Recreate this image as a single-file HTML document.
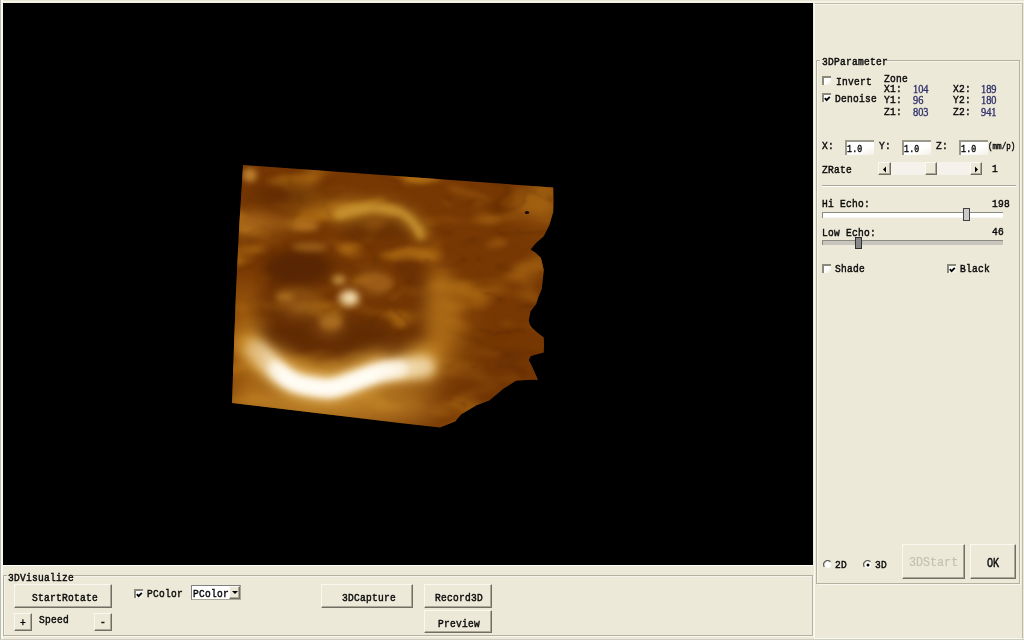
<!DOCTYPE html>
<html><head><meta charset="utf-8">
<style>
*{margin:0;padding:0;box-sizing:border-box}
html,body{width:1024px;height:640px;overflow:hidden;background:#ECE9D8}
body{position:relative;font-family:"Liberation Mono",monospace;font-size:11px;color:#000}
.a{position:absolute}
.t{position:absolute;white-space:pre;font-size:11px;line-height:11px;transform:scaleX(0.87);letter-spacing:0.3px;transform-origin:0 0;color:#0A0A0A;-webkit-text-stroke:0.45px #0A0A0A}
.t.n{font-family:"Liberation Serif",serif;font-size:11.5px;letter-spacing:0;color:#30306A;-webkit-text-stroke:0.35px #30306A;transform:scaleX(0.9)}
.btn{position:absolute;background:#ECE9D8;border-top:1px solid #FAF9F0;border-left:1px solid #FAF9F0;border-right:1px solid #716F64;border-bottom:1px solid #716F64;box-shadow:inset -1px -1px 0 #ACA899}
.grp{position:absolute;border:1px solid #B4B1A0;box-shadow:1px 1px 0 #F8F6EC, inset 1px 1px 0 #F6F4EA}
.cb{position:absolute;width:9px;height:9px;background:linear-gradient(135deg,#fff 40%,#ECEADC 100%);border-top:2px solid #8A897C;border-left:2px solid #8A897C}
.edit{position:absolute;background:linear-gradient(160deg,#fff 55%,#F2F0E6 100%);border-top:2px solid #9A998C;border-left:2px solid #9A998C}
.chk{position:absolute;left:0px;top:1px;width:7px;height:6px}
</style></head>
<body>
<!-- outer frame -->
<div class="a" style="left:0;top:0;width:1024px;height:3px;background:linear-gradient(#E8E7D6 0,#E8E7D6 1px,#F5F3E6 1px)"></div>
<div class="a" style="left:0;top:0;width:3px;height:640px;background:#F8F9F0"></div>
<div class="a" style="left:0;top:0;width:1px;height:640px;background:#BBBCB0"></div>
<div class="a" style="left:0;top:639px;width:1024px;height:1px;background:#D0CEC0"></div>
<!-- black view -->
<div class="a" style="left:3px;top:3px;width:810px;height:562px;background:#000;overflow:hidden">
<svg width="810" height="562" viewBox="3 3 810 562" style="position:absolute;left:0;top:0">
 <defs>
  <clipPath id="vol"><path d="M243,165 L553.2,187.5 L553.5,200 L553.2,212 L549.4,225 L543.8,236.3 L536,243 L530.7,249.4 L536,253 L541,258 L543.8,270 L541.9,288.8 L538,298 L536.3,303.8 L530.6,311.3 L528.8,320.6 L530,325 L532.5,328.2 L538,333 L543.8,337.5 L544,345 L543.8,352.5 L536,354.5 L530.6,356.3 L528.8,360 L532.5,367.5 L536.3,376 L538,380 L533.8,379.8 L516.2,380.6 L503.3,388.8 L489.2,400.5 L476.3,405.2 L461,414.5 L455.2,421.6 L440,427.4 L400,423 L232,403 L233.5,360 L236,290 L239,230 Z"/></clipPath>
  <filter id="b3" x="-50%" y="-50%" width="200%" height="200%" color-interpolation-filters="sRGB"><feGaussianBlur stdDeviation="3"/></filter>
  <filter id="b5" x="-50%" y="-50%" width="200%" height="200%" color-interpolation-filters="sRGB"><feGaussianBlur stdDeviation="5"/></filter>
  <filter id="b8" x="-50%" y="-50%" width="200%" height="200%" color-interpolation-filters="sRGB"><feGaussianBlur stdDeviation="8"/></filter>
  <filter id="b14" x="-50%" y="-50%" width="200%" height="200%" color-interpolation-filters="sRGB"><feGaussianBlur stdDeviation="14"/></filter>
  <filter id="texL" x="0" y="0" width="100%" height="100%" color-interpolation-filters="sRGB"><feTurbulence type="fractalNoise" baseFrequency="0.018 0.04" numOctaves="2" seed="7"/><feColorMatrix type="matrix" values="0 0 0 0 0.70  0 0 0 0 0.44  0 0 0 0 0.08  5 0 0 0 -2.45"/><feGaussianBlur stdDeviation="2.2"/></filter>
  <filter id="texV" x="0" y="0" width="100%" height="100%" color-interpolation-filters="sRGB"><feTurbulence type="turbulence" baseFrequency="0.02 0.03" numOctaves="2" seed="5"/><feColorMatrix type="matrix" values="0 0 0 0 0.33  0 0 0 0 0.14  0 0 0 0 0.0  -5 0 0 0 0.75"/><feGaussianBlur stdDeviation="1.3"/></filter>
  <linearGradient id="gR" x1="0" y1="0" x2="1" y2="0"><stop offset="0" stop-color="#fff" stop-opacity="1"/><stop offset="0.55" stop-color="#fff" stop-opacity="0.9"/><stop offset="1" stop-color="#fff" stop-opacity="0.35"/></linearGradient>
  <mask id="mL"><rect x="200" y="150" width="400" height="300" fill="url(#gR)"/></mask>
  <linearGradient id="gV" x1="0" y1="0" x2="1" y2="0"><stop offset="0" stop-color="#fff" stop-opacity="0.2"/><stop offset="0.5" stop-color="#fff" stop-opacity="0.35"/><stop offset="1" stop-color="#fff" stop-opacity="0.6"/></linearGradient>
  <mask id="mV"><rect x="200" y="150" width="400" height="300" fill="url(#gV)"/></mask>
  <linearGradient id="gArc" gradientUnits="userSpaceOnUse" x1="256" y1="0" x2="424" y2="0"><stop offset="0" stop-color="#F8E8C8" stop-opacity="0.45"/><stop offset="0.12" stop-color="#F8E8C8" stop-opacity="0.95"/><stop offset="0.8" stop-color="#F8E8C8" stop-opacity="1"/><stop offset="1" stop-color="#F8E8C8" stop-opacity="0.7"/></linearGradient>
  <linearGradient id="gArc2" gradientUnits="userSpaceOnUse" x1="262" y1="0" x2="400" y2="0"><stop offset="0" stop-color="#FFFCF4" stop-opacity="0.2"/><stop offset="0.15" stop-color="#FFFCF4" stop-opacity="1"/><stop offset="0.8" stop-color="#FFFCF4" stop-opacity="1"/><stop offset="1" stop-color="#FFFCF4" stop-opacity="0.6"/></linearGradient>
 </defs>
 <g clip-path="url(#vol)">
  <rect x="200" y="150" width="400" height="300" fill="#773804"/>
  <g mask="url(#mL)"><rect x="200" y="150" width="400" height="300" filter="url(#texL)"/></g>
  <g mask="url(#mV)"><rect x="200" y="150" width="400" height="300" filter="url(#texV)"/></g>
  <g filter="url(#b14)">
   <ellipse cx="330" cy="404" rx="110" ry="20" fill="#C08428"/>
   <ellipse cx="246" cy="340" rx="14" ry="60" fill="#B06C14"/>
   <ellipse cx="490" cy="385" rx="50" ry="26" fill="#6A3004" opacity="0.5"/>
   <ellipse cx="288" cy="197" rx="40" ry="14" fill="#6A3004" opacity="0.5"/>
   <ellipse cx="540" cy="205" rx="16" ry="18" fill="#B07018" opacity="0.7"/>
   <ellipse cx="445" cy="330" rx="20" ry="45" fill="#B07018" opacity="0.6"/>
  </g>
  <g filter="url(#b8)">
   <path d="M256,350 C259.2,353.2 269.0,363.8 275,369 C281.0,374.2 286.3,378.2 292,381 C297.7,383.8 302.3,384.8 309,386 C315.7,387.2 324.0,389.0 332,388 C340.0,387.0 349.0,382.7 357,380 C365.0,377.3 372.8,373.8 380,372 C387.2,370.2 392.7,369.8 400,369 C407.3,368.2 420.0,367.3 424,367" stroke="#D29A3A" stroke-width="36" stroke-linecap="round" fill="none" transform="translate(0,-3)"/>
   <ellipse cx="328" cy="336" rx="68" ry="22" fill="#5A2703" opacity="0.75"/>
   <ellipse cx="272" cy="315" rx="16" ry="28" fill="#5E2A03" opacity="0.55"/>
   <path d="M400,258 Q428,285 418,325 Q408,350 385,358" stroke="#5C2803" stroke-width="16" fill="none" opacity="0.6"/>
   <ellipse cx="335" cy="300" rx="60" ry="40" fill="#6A3004" opacity="0.2"/>
   <ellipse cx="298" cy="268" rx="36" ry="20" fill="#5C2803"/>
   <ellipse cx="378" cy="229" rx="40" ry="8" fill="#5E2A03" opacity="0.75"/>
   
   <ellipse cx="345" cy="210" rx="18" ry="11" fill="#B87C20" opacity="0.8"/>
   <path d="M334,217 Q372,200 404,214 Q418,224 423,240" stroke="#C08A28" stroke-width="10" fill="none"/>
   <ellipse cx="440" cy="312" rx="16" ry="48" fill="#B0701A" opacity="0.75"/>
   <ellipse cx="372" cy="282" rx="14" ry="10" fill="#A86A20" opacity="0.8"/>
   <ellipse cx="300" cy="305" rx="16" ry="10" fill="#A86A20" opacity="0.8"/>
   <ellipse cx="330" cy="325" rx="14" ry="9" fill="#A86A20" opacity="0.8"/>
   <ellipse cx="253" cy="222" rx="14" ry="9" fill="#B07020"/>
   <ellipse cx="287" cy="195" rx="36" ry="11" fill="#5E2A03" opacity="0.75"/>
   <ellipse cx="268" cy="224" rx="26" ry="7" fill="#B47420" opacity="0.8"/>
  </g>
  <g filter="url(#b5)">
   <path d="M256,350 C259.2,353.2 269.0,363.8 275,369 C281.0,374.2 286.3,378.2 292,381 C297.7,383.8 302.3,384.8 309,386 C315.7,387.2 324.0,389.0 332,388 C340.0,387.0 349.0,382.7 357,380 C365.0,377.3 372.8,373.8 380,372 C387.2,370.2 392.7,369.8 400,369 C407.3,368.2 420.0,367.3 424,367" stroke="url(#gArc)" stroke-width="21" stroke-linecap="round" fill="none"/>
  </g>
  <g filter="url(#b3)">
   <path d="M275,369 C277.8,371.0 286.3,378.2 292,381 C297.7,383.8 302.3,384.8 309,386 C315.7,387.2 324.0,389.0 332,388 C340.0,387.0 349.0,382.7 357,380 C365.0,377.3 372.8,373.8 380,372 C387.2,370.2 396.7,369.5 400,369" stroke="url(#gArc2)" stroke-width="15" stroke-linecap="round" fill="none"/>
   <path d="M338,215 Q372,202 402,213 Q416,222 421,236" stroke="#CC9834" stroke-width="7" stroke-linecap="round" fill="none" opacity="0.9"/>
   <ellipse cx="298" cy="268" rx="30" ry="15" fill="#562503" opacity="0.6"/>
   <ellipse cx="250" cy="175" rx="7" ry="7" fill="#BC8030"/>
   <ellipse cx="305" cy="226" rx="14" ry="5" fill="#B07020"/>
   <ellipse cx="310" cy="247" rx="18" ry="4" fill="#A86C20" opacity="0.8"/>
   <ellipse cx="349" cy="298" rx="11" ry="9" fill="#D8B070" opacity="0.9"/><ellipse cx="350" cy="298" rx="6" ry="5" fill="#F4E0B8"/>
   <ellipse cx="339" cy="280" rx="7" ry="5" fill="#BC8A3C"/>
   <ellipse cx="285" cy="297" rx="10" ry="5" fill="#A86C20"/>
   <ellipse cx="331" cy="322" rx="11" ry="7" fill="#A86C20"/>
   <ellipse cx="380" cy="284" rx="12" ry="8" fill="#9C5C18"/>
  </g>
  <ellipse cx="527" cy="212.5" rx="2.2" ry="1.6" fill="#1A0A00"/>
  
 </g>
</svg>
</div>
<div class="a" style="left:3px;top:565px;width:811px;height:1px;background:#fff"></div>
<!-- right panel -->
<div class="a" style="left:814px;top:3px;width:209px;height:636px;border-top:1px solid #BDBAA8;border-right:1px solid #BDBAA8;border-left:1px solid #FAF9F0;border-bottom:1px solid #F8F7EE;box-shadow:inset 0 1px 0 #F6F4EA"></div>
<div class="grp" style="left:816px;top:60px;width:204px;height:524px"></div>
<div class="a" style="left:820px;top:55px;width:66px;height:10px;background:#ECE9D8"></div>
<span class="t" style="left:822px;top:57px">3DParameter</span>

<div class="cb" style="left:822px;top:76px"></div>
<span class="t" style="left:836px;top:77px">Invert</span>
<div class="cb" style="left:822px;top:93px"><svg class="chk" viewBox="0 0 7 6"><path d="M0.8 2.2 L2.6 4.2 L5.8 0.8" stroke="#000" stroke-width="1.8" fill="none"/></svg></div>
<span class="t" style="left:835px;top:94px">Denoise</span>

<span class="t" style="left:884px;top:74px">Zone</span>
<span class="t" style="left:884px;top:84px">X1:</span>
<span class="t n" style="left:913px;top:84px">104</span>
<span class="t" style="left:953px;top:84px">X2:</span>
<span class="t n" style="left:981px;top:84px">189</span>
<span class="t" style="left:884px;top:95px">Y1:</span>
<span class="t n" style="left:913px;top:95px">96</span>
<span class="t" style="left:953px;top:95px">Y2:</span>
<span class="t n" style="left:981px;top:95px">180</span>
<span class="t" style="left:884px;top:107px">Z1:</span>
<span class="t n" style="left:913px;top:107px">803</span>
<span class="t" style="left:953px;top:107px">Z2:</span>
<span class="t n" style="left:981px;top:107px">941</span>

<span class="t" style="left:822px;top:141px">X:</span>
<div class="edit" style="left:845px;top:140px;width:29px;height:15px"></div>
<span class="t" style="left:847px;top:144px;transform:scaleX(0.75)">1.0</span>
<span class="t" style="left:879px;top:141px">Y:</span>
<div class="edit" style="left:902px;top:140px;width:29px;height:15px"></div>
<span class="t" style="left:904px;top:144px;transform:scaleX(0.75)">1.0</span>
<span class="t" style="left:936px;top:141px">Z:</span>
<div class="edit" style="left:959px;top:140px;width:29px;height:15px"></div>
<span class="t" style="left:961px;top:144px;transform:scaleX(0.75)">1.0</span>
<span class="t" style="left:988px;top:142px;font-size:9.5px;line-height:10px;transform:scaleX(0.8);letter-spacing:0">(mm/p)</span>

<span class="t" style="left:822px;top:165px">ZRate</span>
<!-- scrollbar -->
<div class="a" style="left:878px;top:162px;width:104px;height:13px;background:#F4F2EA"></div>
<div class="btn" style="left:878px;top:162px;width:13px;height:13px"><svg style="position:absolute;left:3px;top:3px" width="5" height="7"><path d="M4 0.5 L1 3.5 L4 6.5Z" fill="#000"/></svg></div>
<div class="btn" style="left:925px;top:162px;width:12px;height:13px"></div>
<div class="btn" style="left:970px;top:162px;width:12px;height:13px"><svg style="position:absolute;left:3px;top:3px" width="5" height="7"><path d="M1 0.5 L4 3.5 L1 6.5Z" fill="#000"/></svg></div>
<span class="t" style="left:992px;top:164px">1</span>
<div class="a" style="left:822px;top:185px;width:194px;height:1px;background:#ACA899"></div>
<div class="a" style="left:822px;top:186px;width:194px;height:1px;background:#fff"></div>

<span class="t" style="left:822px;top:199px">Hi Echo:</span>
<span class="t" style="left:992px;top:199px">198</span>
<div class="a" style="left:822px;top:212px;width:181px;height:6px;background:linear-gradient(#fff 70%,#F4F2EA);border-top:1px solid #8A8A80;border-left:1px solid #8A8A80"></div>
<div class="a" style="left:963px;top:208px;width:7px;height:13px;background:#CACACA;border:1px solid #404040"></div>
<span class="t" style="left:822px;top:228px">Low Echo:</span>
<span class="t" style="left:992px;top:227px">46</span>
<div class="a" style="left:822px;top:240px;width:181px;height:5px;background:#C8C6BC;border-top:1px solid #8A8A80;border-left:1px solid #8A8A80"></div>
<div class="a" style="left:855px;top:237px;width:7px;height:12px;background:#888888;border:1px solid #303030"></div>

<div class="cb" style="left:822px;top:264px"></div>
<span class="t" style="left:835px;top:264px">Shade</span>
<div class="cb" style="left:947px;top:264px"><svg class="chk" viewBox="0 0 7 6"><path d="M0.8 2.2 L2.6 4.2 L5.8 0.8" stroke="#000" stroke-width="1.8" fill="none"/></svg></div>
<span class="t" style="left:960px;top:264px">Black</span>

<!-- radios -->
<svg class="a" style="left:823px;top:560px" width="10" height="10"><path d="M7.5 1.8 A4 4 0 0 0 1.3 6.8" stroke="#606060" stroke-width="1.2" fill="none"/><circle cx="5" cy="5" r="3" fill="#fff"/></svg>
<span class="t" style="left:835px;top:560px">2D</span>
<svg class="a" style="left:863px;top:560px" width="10" height="10"><path d="M7.5 1.8 A4 4 0 0 0 1.3 6.8" stroke="#606060" stroke-width="1.2" fill="none"/><circle cx="5" cy="5" r="3" fill="#fff"/><circle cx="5" cy="5" r="1.5" fill="#000"/></svg>
<span class="t" style="left:875px;top:560px">3D</span>
<div class="btn" style="left:902px;top:544px;width:63px;height:35px"><span class="t" style="left:6px;top:11px;font-size:13px;line-height:13px;letter-spacing:0;transform:scaleX(0.9);color:#C4C1B2;-webkit-text-stroke:0.2px #C4C1B2">3DStart</span></div>
<div class="btn" style="left:970px;top:544px;width:46px;height:35px"><span class="t" style="left:16px;top:12px;font-size:13px;line-height:13px;letter-spacing:0;transform:scaleX(0.78)">OK</span></div>

<!-- bottom group -->
<div class="grp" style="left:3px;top:575px;width:810px;height:61px"></div>
<div class="a" style="left:7px;top:570px;width:66px;height:10px;background:#ECE9D8"></div>
<span class="t" style="left:8px;top:573px">3DVisualize</span>
<div class="btn" style="left:14px;top:584px;width:98px;height:24px"><span class="t" style="left:17px;top:8px">StartRotate</span></div>
<div class="btn" style="left:14px;top:613px;width:18px;height:18px"><span class="t" style="left:5px;top:4px">+</span></div>
<span class="t" style="left:39px;top:615px">Speed</span>
<div class="btn" style="left:94px;top:613px;width:18px;height:18px"><span class="t" style="left:5px;top:3px">-</span></div>
<div class="cb" style="left:134px;top:589px"><svg class="chk" viewBox="0 0 7 6"><path d="M0.8 2.2 L2.6 4.2 L5.8 0.8" stroke="#000" stroke-width="1.8" fill="none"/></svg></div>
<span class="t" style="left:147px;top:589px">PColor</span>
<div class="a" style="left:191px;top:585px;width:50px;height:15px;background:#fff;border-top:1px solid #808080;border-left:1px solid #808080;border-right:1px solid #ACA899;border-bottom:1px solid #ACA899"></div>
<span class="t" style="left:193px;top:589px">PColor</span>
<div class="btn" style="left:229px;top:586px;width:11px;height:13px"><svg style="position:absolute;left:2px;top:4px" width="6" height="4"><path d="M0 0 L6 0 L3 3Z" fill="#000"/></svg></div>
<div class="btn" style="left:321px;top:584px;width:92px;height:24px"><span class="t" style="left:20px;top:8px">3DCapture</span></div>
<div class="btn" style="left:424px;top:584px;width:68px;height:24px"><span class="t" style="left:10px;top:8px">Record3D</span></div>
<div class="btn" style="left:424px;top:610px;width:68px;height:23px"><span class="t" style="left:13px;top:8px">Preview</span></div>
</body></html>
